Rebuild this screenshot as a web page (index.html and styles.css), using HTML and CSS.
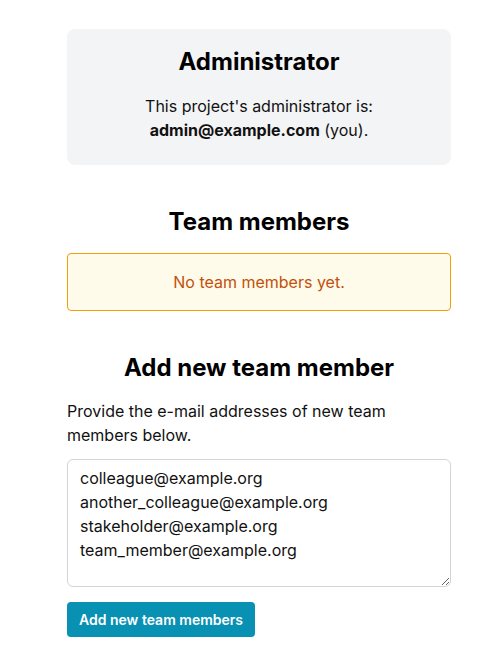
FILE: index.html
```html
<!DOCTYPE html>
<html lang="en">
<head>
<meta charset="utf-8">
<title>Team</title>
<link rel="stylesheet" href="styles.css">
</head>
<body>
<main class="page">
  <section class="admin-box">
    <h2 class="heading">Administrator</h2>
    <p class="admin-text">This project's administrator is:<br><strong>admin@example.com</strong> (you).</p>
  </section>

  <section class="section">
    <h2 class="heading">Team members</h2>
    <div class="notice">No team members yet.</div>
  </section>

  <section class="section">
    <h2 class="heading">Add new team member</h2>
    <p class="intro">Provide the e-mail addresses of new team members below.</p>
    <textarea class="emails">colleague@example.org
another_colleague@example.org
stakeholder@example.org
team_member@example.org</textarea>
    <button class="btn" type="button">Add new team members</button>
  </section>
</main>
</body>
</html>
```

FILE: styles.css
```css
* { box-sizing: border-box; }
html, body { margin: 0; padding: 0; background: #fff; }
body {
  font-family: Inter, "Noto Sans", sans-serif;
  color: #111;
  font-size: 16px;
  line-height: 24px;
}
.page {
  width: 384px;
  margin-left: 67px;
  padding-top: 29px;
  padding-bottom: 30px;
}
.heading {
  margin: 0;
  font-size: 24px;
  line-height: 32px;
  font-weight: 700;
  text-align: center;
  color: #000;
}
.admin-box {
  background: #f3f4f6;
  border-radius: 8px;
  padding: 17px 16px 23px;
}
.admin-text {
  margin: 16px 0 0;
  text-align: center;
}
.admin-text strong { font-weight: 700; }
.section { margin-top: 41px; }
.notice {
  margin-top: 15px;
  border: 1px solid #f59e0b;
  background: #fefbea;
  color: #c2500c;
  border-radius: 4px;
  padding: 16px;
  text-align: center;
}
.intro {
  margin: 15px 0 12px;
}
.emails {
  display: block;
  width: 100%;
  height: 128px;
  padding: 6px 12px;
  border: 1px solid #d1d5db;
  border-radius: 6px;
  font-family: Inter, "Noto Sans", sans-serif;
  font-size: 16px;
  line-height: 24px;
  color: #111;
  background: #fff;
  resize: vertical;
}
.btn {
  display: inline-block;
  margin-top: 15px;
  background: #0891b2;
  color: #fff;
  border: 0;
  border-radius: 4px;
  padding: 8px 12px;
  font-family: Inter, "Noto Sans", sans-serif;
  font-size: 14px;
  line-height: 19px;
  font-weight: 600;
}
```
